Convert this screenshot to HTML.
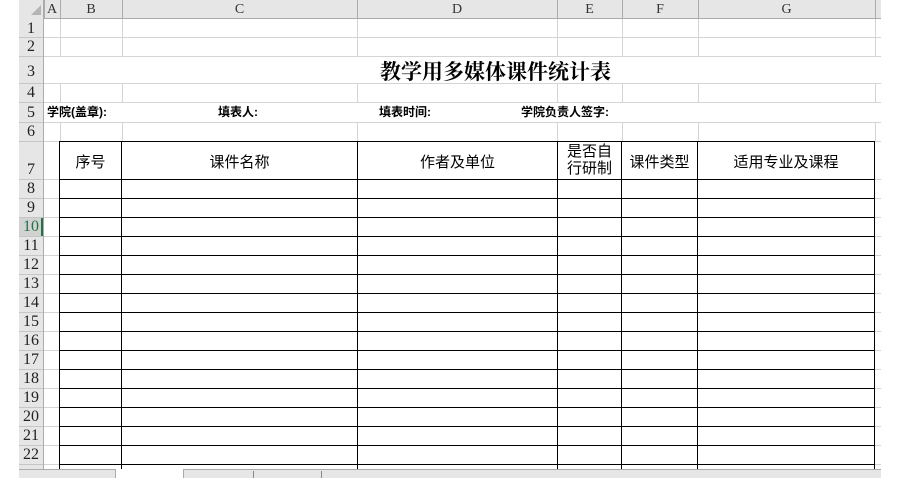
<!DOCTYPE html>
<html><head><meta charset="utf-8"><style>
body{margin:0;width:900px;height:478px;background:#fff;position:relative;overflow:hidden;font-family:"Liberation Sans","Noto Sans CJK SC",sans-serif}
div{position:absolute;box-sizing:border-box}
.h{height:1px;background:#d4d4d4}
.v{width:1px;background:#d4d4d4}
.bh{height:1px;background:#000}
.bv{width:1px;background:#000}
.rn{left:19px;width:24px;text-align:center;font-family:"Liberation Serif",serif;font-size:16px;color:#222;line-height:19px}
.cn{top:0;height:19px;line-height:19px;text-align:center;font-family:"Liberation Serif",serif;font-size:14px;color:#333}
.t{font-size:15px;color:#000;text-align:center}
</style></head><body>
<div style="left:19px;top:0;width:862px;height:19px;background:#e6e6e6;border-bottom:1px solid #ababab"></div>
<div style="left:19px;top:0;width:25px;height:469px;background:#e6e6e6;border-right:1px solid #ababab"></div>
<div style="left:31px;top:5px;width:0;height:0;border-left:10px solid transparent;border-bottom:10px solid #b4b4b4"></div>
<div class="v" style="left:44px;top:0;height:19px;background:#ababab"></div>
<div class="v" style="left:60px;top:0;height:19px;background:#ababab"></div>
<div class="v" style="left:122px;top:0;height:19px;background:#ababab"></div>
<div class="v" style="left:357px;top:0;height:19px;background:#ababab"></div>
<div class="v" style="left:557px;top:0;height:19px;background:#ababab"></div>
<div class="v" style="left:622px;top:0;height:19px;background:#ababab"></div>
<div class="v" style="left:698px;top:0;height:19px;background:#ababab"></div>
<div class="v" style="left:875px;top:0;height:19px;background:#ababab"></div>
<div class="cn" style="left:44px;width:16px">A</div>
<div class="cn" style="left:60px;width:62px">B</div>
<div class="cn" style="left:122px;width:235px">C</div>
<div class="cn" style="left:357px;width:200px">D</div>
<div class="cn" style="left:557px;width:65px">E</div>
<div class="cn" style="left:622px;width:76px">F</div>
<div class="cn" style="left:698px;width:177px">G</div>
<div class="h" style="left:44px;top:37px;width:837px"></div>
<div class="h" style="left:44px;top:56px;width:837px"></div>
<div class="h" style="left:44px;top:83px;width:837px"></div>
<div class="h" style="left:44px;top:102px;width:837px"></div>
<div class="h" style="left:44px;top:122px;width:837px"></div>
<div class="h" style="left:44px;top:141px;width:837px"></div>
<div class="h" style="left:44px;top:179px;width:16px"></div>
<div class="h" style="left:44px;top:198px;width:16px"></div>
<div class="h" style="left:44px;top:217px;width:16px"></div>
<div class="h" style="left:44px;top:236px;width:16px"></div>
<div class="h" style="left:44px;top:255px;width:16px"></div>
<div class="h" style="left:44px;top:274px;width:16px"></div>
<div class="h" style="left:44px;top:293px;width:16px"></div>
<div class="h" style="left:44px;top:312px;width:16px"></div>
<div class="h" style="left:44px;top:331px;width:16px"></div>
<div class="h" style="left:44px;top:350px;width:16px"></div>
<div class="h" style="left:44px;top:369px;width:16px"></div>
<div class="h" style="left:44px;top:388px;width:16px"></div>
<div class="h" style="left:44px;top:407px;width:16px"></div>
<div class="h" style="left:44px;top:426px;width:16px"></div>
<div class="h" style="left:44px;top:445px;width:16px"></div>
<div class="h" style="left:44px;top:464px;width:16px"></div>
<div class="h" style="left:875px;top:179px;width:6px"></div><div class="h" style="left:875px;top:198px;width:6px"></div><div class="h" style="left:875px;top:217px;width:6px"></div><div class="h" style="left:875px;top:236px;width:6px"></div><div class="h" style="left:875px;top:255px;width:6px"></div><div class="h" style="left:875px;top:274px;width:6px"></div><div class="h" style="left:875px;top:293px;width:6px"></div><div class="h" style="left:875px;top:312px;width:6px"></div><div class="h" style="left:875px;top:331px;width:6px"></div><div class="h" style="left:875px;top:350px;width:6px"></div><div class="h" style="left:875px;top:369px;width:6px"></div><div class="h" style="left:875px;top:388px;width:6px"></div><div class="h" style="left:875px;top:407px;width:6px"></div><div class="h" style="left:875px;top:426px;width:6px"></div><div class="h" style="left:875px;top:445px;width:6px"></div><div class="h" style="left:875px;top:464px;width:6px"></div>
<div class="v" style="left:60px;top:19px;height:37px"></div><div class="v" style="left:122px;top:19px;height:37px"></div><div class="v" style="left:357px;top:19px;height:37px"></div><div class="v" style="left:557px;top:19px;height:37px"></div><div class="v" style="left:622px;top:19px;height:37px"></div><div class="v" style="left:698px;top:19px;height:37px"></div><div class="v" style="left:875px;top:19px;height:37px"></div>
<div class="v" style="left:60px;top:83px;height:19px"></div><div class="v" style="left:122px;top:83px;height:19px"></div><div class="v" style="left:357px;top:83px;height:19px"></div><div class="v" style="left:557px;top:83px;height:19px"></div><div class="v" style="left:622px;top:83px;height:19px"></div><div class="v" style="left:698px;top:83px;height:19px"></div><div class="v" style="left:875px;top:83px;height:19px"></div>
<div class="v" style="left:60px;top:122px;height:19px"></div><div class="v" style="left:122px;top:122px;height:19px"></div><div class="v" style="left:357px;top:122px;height:19px"></div><div class="v" style="left:557px;top:122px;height:19px"></div><div class="v" style="left:622px;top:122px;height:19px"></div><div class="v" style="left:698px;top:122px;height:19px"></div><div class="v" style="left:875px;top:122px;height:19px"></div>
<div class="rn" style="top:19px">1</div><div class="rn" style="top:37px">2</div>
<div class="rn" style="top:62px">3</div><div class="rn" style="top:83px">4</div>
<div class="rn" style="top:103px">5</div><div class="rn" style="top:122px">6</div>
<div class="rn" style="top:160px">7</div><div class="rn" style="top:179px">8</div>
<div class="rn" style="top:198px">9</div>
<div class="rn" style="top:217px;background:#d2d2d2;color:#217346">10</div>
<div style="left:41px;top:217px;width:2px;height:19px;background:#217346"></div>
<div class="rn" style="top:236px">11</div><div class="rn" style="top:255px">12</div><div class="rn" style="top:274px">13</div><div class="rn" style="top:293px">14</div><div class="rn" style="top:312px">15</div><div class="rn" style="top:331px">16</div><div class="rn" style="top:350px">17</div><div class="rn" style="top:369px">18</div><div class="rn" style="top:388px">19</div><div class="rn" style="top:407px">20</div><div class="rn" style="top:426px">21</div><div class="rn" style="top:445px">22</div>
<div class="h" style="left:19px;top:37px;width:24px;background:#c6c6c6"></div><div class="h" style="left:19px;top:56px;width:24px;background:#c6c6c6"></div><div class="h" style="left:19px;top:83px;width:24px;background:#c6c6c6"></div><div class="h" style="left:19px;top:102px;width:24px;background:#c6c6c6"></div><div class="h" style="left:19px;top:122px;width:24px;background:#c6c6c6"></div><div class="h" style="left:19px;top:141px;width:24px;background:#c6c6c6"></div><div class="h" style="left:19px;top:179px;width:24px;background:#c6c6c6"></div><div class="h" style="left:19px;top:198px;width:24px;background:#c6c6c6"></div><div class="h" style="left:19px;top:217px;width:24px;background:#c6c6c6"></div><div class="h" style="left:19px;top:236px;width:24px;background:#c6c6c6"></div><div class="h" style="left:19px;top:255px;width:24px;background:#c6c6c6"></div><div class="h" style="left:19px;top:274px;width:24px;background:#c6c6c6"></div><div class="h" style="left:19px;top:293px;width:24px;background:#c6c6c6"></div><div class="h" style="left:19px;top:312px;width:24px;background:#c6c6c6"></div><div class="h" style="left:19px;top:331px;width:24px;background:#c6c6c6"></div><div class="h" style="left:19px;top:350px;width:24px;background:#c6c6c6"></div><div class="h" style="left:19px;top:369px;width:24px;background:#c6c6c6"></div><div class="h" style="left:19px;top:388px;width:24px;background:#c6c6c6"></div><div class="h" style="left:19px;top:407px;width:24px;background:#c6c6c6"></div><div class="h" style="left:19px;top:426px;width:24px;background:#c6c6c6"></div><div class="h" style="left:19px;top:445px;width:24px;background:#c6c6c6"></div><div class="h" style="left:19px;top:464px;width:24px;background:#c6c6c6"></div>
<div style="left:88px;top:57px;width:815px;text-align:center;font-size:21px;font-weight:bold;color:#000;line-height:28px;font-family:'Noto Serif CJK SC','Noto Sans CJK SC',serif">教学用多媒体课件统计表</div>
<div style="left:47px;top:104px;font-size:12px;line-height:16px;color:#000;font-weight:bold">学院(盖章):</div>
<div style="left:218px;top:104px;font-size:12px;line-height:16px;font-weight:bold">填表人:</div>
<div style="left:379px;top:104px;font-size:12px;line-height:16px;font-weight:bold">填表时间:</div>
<div style="left:521px;top:104px;font-size:12px;line-height:16px;font-weight:bold">学院负责人签字:</div>
<div class="bh" style="left:60px;top:141px;width:815px"></div>
<div class="bh" style="left:60px;top:179px;width:815px"></div><div class="bh" style="left:60px;top:198px;width:815px"></div><div class="bh" style="left:60px;top:217px;width:815px"></div><div class="bh" style="left:60px;top:236px;width:815px"></div><div class="bh" style="left:60px;top:255px;width:815px"></div><div class="bh" style="left:60px;top:274px;width:815px"></div><div class="bh" style="left:60px;top:293px;width:815px"></div><div class="bh" style="left:60px;top:312px;width:815px"></div><div class="bh" style="left:60px;top:331px;width:815px"></div><div class="bh" style="left:60px;top:350px;width:815px"></div><div class="bh" style="left:60px;top:369px;width:815px"></div><div class="bh" style="left:60px;top:388px;width:815px"></div><div class="bh" style="left:60px;top:407px;width:815px"></div><div class="bh" style="left:60px;top:426px;width:815px"></div><div class="bh" style="left:60px;top:445px;width:815px"></div><div class="bh" style="left:60px;top:464px;width:815px"></div>
<div class="bv" style="left:59px;top:141px;height:328px"></div>
<div class="bv" style="left:121px;top:141px;height:328px"></div>
<div class="bv" style="left:357px;top:141px;height:328px"></div>
<div class="bv" style="left:557px;top:141px;height:328px"></div>
<div class="bv" style="left:621px;top:141px;height:328px"></div>
<div class="bv" style="left:697px;top:141px;height:328px"></div>
<div class="bv" style="left:874px;top:141px;height:328px"></div>
<div class="t" style="left:60px;top:151px;width:61px">序号</div>
<div class="t" style="left:122px;top:151px;width:235px">课件名称</div>
<div class="t" style="left:358px;top:151px;width:199px">作者及单位</div>
<div class="t" style="left:558px;top:143px;width:63px;line-height:17px">是否自<br>行研制</div>
<div class="t" style="left:622px;top:151px;width:75px">课件类型</div>
<div class="t" style="left:698px;top:151px;width:176px">适用专业及课程</div>
<div style="left:19px;top:469px;width:862px;height:9px;background:#e6e6e6;border-top:1px solid #ababab"></div>
<div style="left:115px;top:469px;width:69px;height:9px;background:#fff;border-left:1px solid #ababab;border-right:1px solid #ababab"></div>
<div class="v" style="left:253px;top:471px;height:7px;background:#888"></div>
<div class="v" style="left:321px;top:471px;height:7px;background:#888"></div>
</body></html>
